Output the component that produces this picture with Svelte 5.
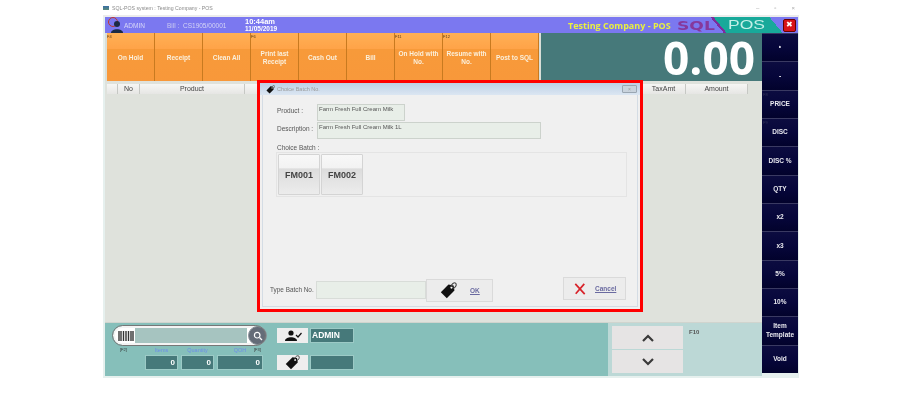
<script>
  const tools = [
    { key: 'F4', label: 'On Hold' },
    { key: '', label: 'Receipt' },
    { key: '', label: 'Clean All' },
    { key: 'F6', label: 'Print last Receipt' },
    { key: '', label: 'Cash Out' },
    { key: '', label: 'Bill' },
    { key: 'F11', label: 'On Hold with No.' },
    { key: 'F12', label: 'Resume with No.' },
    { key: '', label: 'Post to SQL' }
  ];
  const side = [
    { label: '•' },
    { label: '-' },
    { label: 'PRICE', key: 'F8' },
    { label: 'DISC', key: 'F9' },
    { label: 'DISC %' },
    { label: 'QTY' },
    { label: 'x2' },
    { label: 'x3' },
    { label: '5%' },
    { label: '10%' },
    { label: 'Item Template' },
    { label: 'Void' }
  ];
  const columns = [
    { label: '', w: 11 },
    { label: 'No', w: 22 },
    { label: 'Product', w: 105 },
    { label: '', w: 397 },
    { label: 'TaxAmt', w: 44 },
    { label: 'Amount', w: 62 }
  ];
  const totals = [
    { label: 'Items', w: 33 },
    { label: 'Quantity', w: 33 },
    { label: 'QOH', w: 46 }
  ];
</script>

{#snippet tag(size)}
  <svg width={size} height={size} viewBox="0 0 20 20" aria-hidden="true">
    <path d="M1 12 L10 3 L16 4 L17 10 L8 19 Z" fill="#111" />
    <circle cx="13.500" cy="6.500" r="1.300" fill="#fff" />
    <path d="M13 6 C13 2 17 0 18.500 1.500 C20 3.500 18 7 15.500 7.500" fill="none" stroke="#444" stroke-width="1.300" />
  </svg>
{/snippet}

<div class="window">
  <div class="os-title">
    <span class="os-icon"></span>
    <span class="os-text">SQL-POS system : Testing Company - POS</span>
    <span class="os-controls"><i>–</i><i>▫</i><i>×</i></span>
  </div>

  <header class="topbar">
    <svg class="user" width="16" height="16" viewBox="0 0 16 16" aria-hidden="true">
      <circle cx="5" cy="5" r="4.5" fill="none" stroke="#c0392b" />
      <circle cx="9" cy="7" r="3" fill="#1c2a44" />
      <path d="M3 16 C3 11 15 11 15 16 Z" fill="#1c2a44" />
    </svg>
    <span class="admin">ADMIN</span>
    <span class="bill">Bill :</span>
    <span class="billno">CS1905/00001</span>
    <div class="clock"><b>10:44am</b><b>11/05/2019</b></div>
    <span class="company">Testing Company - POS</span>
    <div class="logo">
      <span class="sql">SQL</span>
      <span class="pos">POS</span>
    </div>
    <button class="close">✖</button>
  </header>

  <div class="body">
    <div class="left">
      <div class="top-row">
        <div class="tools">
          {#each tools as t}
            <div class="tool">
              <small>{t.key}</small>
              <span>{t.label}</span>
            </div>
          {/each}
        </div>
        <div class="display">0.00</div>
      </div>

      <div class="main">
        <div class="thead">
          {#each columns as c}
            <div class="th" style="width:{c.w}px">{c.label}</div>
          {/each}
        </div>

        <div class="modal">
          <div class="modal-title">
            {@render tag(9)}
            <span>Choice Batch No.</span>
            <i class="modal-x">×</i>
          </div>
          <div class="modal-body">
            <div class="row">
              <label for="product">Product :</label>
              <div id="product" class="ro product">Farm Fresh Full Cream Milk</div>
            </div>
            <div class="row">
              <label for="desc">Description :</label>
              <div id="desc" class="ro desc">Farm Fresh Full Cream Milk 1L</div>
            </div>
            <div class="batch-label">Choice Batch :</div>
            <div class="batches">
              <button class="batch">FM001</button>
              <button class="batch">FM002</button>
            </div>
            <div class="foot">
              <span class="type-label">Type Batch No.</span>
              <input class="type-input" />
              <button class="ok">{@render tag(17)}<u>OK</u></button>
              <button class="cancel">
                <svg width="12" height="12" viewBox="0 0 14 14" aria-hidden="true">
                  <path d="M1.5 1 L12.5 13 M12 1 L2 12.5" stroke="#d8232a" stroke-width="2" fill="none" />
                </svg>
                <u>Cancel</u>
              </button>
            </div>
          </div>
        </div>
      </div>

      <div class="bottom">
        <div class="panel">
          <div class="scan">
            <div class="search">
              <svg class="barcode" width="16" height="12" viewBox="0 0 16 12" aria-hidden="true">
                <path d="M1 1v10M3 1v10M5.500 1v10M8 1v10M10.500 1v10M13 1v10M15 1v10" stroke="#333" stroke-width="1.4" />
              </svg>
              <div class="search-input"></div>
              <span class="lens">
                <svg width="10" height="10" viewBox="0 0 10 10" aria-hidden="true">
                  <circle cx="4.200" cy="4.200" r="2.800" fill="none" stroke="#fff" stroke-width="1.200" />
                  <path d="M6.500 6.500 L9 9" stroke="#fff" stroke-width="1.300" />
                </svg>
              </span>
            </div>
            <div class="totals">
              <small class="fkey">[F2]</small>
              {#each totals as t}
                <div class="total" style="width:{t.w}px">
                  <span>{t.label}</span>
                  <b>0</b>
                </div>
              {/each}
              <small class="fkey fkey-r">[F3]</small>
            </div>
          </div>
          <div class="info">
            <div class="info-row">
              <span class="info-btn">
                <svg width="18" height="11" viewBox="0 0 18 11" aria-hidden="true">
                  <circle cx="7" cy="3" r="2.600" fill="#111" />
                  <path d="M1 11 C1 6 13 6 13 11 Z" fill="#111" />
                  <path d="M12 5 L14 7 L17.500 3" fill="none" stroke="#111" stroke-width="1.200" />
                </svg>
              </span>
              <span class="info-val">ADMIN</span>
            </div>
            <div class="info-row">
              <span class="info-btn">{@render tag(15)}</span>
              <span class="info-val"></span>
            </div>
          </div>
        </div>
        <div class="pager">
          <div class="arrows">
            <button class="arrow" aria-label="up">
              <svg width="12" height="8" viewBox="0 0 12 8"><path d="M1 7 L6 2 L11 7" fill="none" stroke="#3a3a3a" stroke-width="2.200" /></svg>
            </button>
            <button class="arrow" aria-label="down">
              <svg width="12" height="8" viewBox="0 0 12 8"><path d="M1 1 L6 6 L11 1" fill="none" stroke="#3a3a3a" stroke-width="2.200" /></svg>
            </button>
          </div>
          <span class="f10">F10</span>
        </div>
      </div>
    </div>

    <aside class="side">
      {#each side as s}
        <button class="side-btn">
          {#if s.key}<small>{s.key}</small>{/if}
          {s.label}
        </button>
      {/each}
    </aside>
  </div>
</div>

<style>
  :global(body) {
    margin: 0;
    background: #fff;
    overflow: hidden;
  }

  .window {
    width: 696px;
    height: 378px;
    margin-left: 103px;
    background: #e6f0ee;
    font-family: "Liberation Sans", Arial, sans-serif;
    filter: blur(0.5px);
    display: flex;
    flex-direction: column;
  }

  .os-title {
    height: 15px;
    display: flex;
    align-items: center;
    gap: 3px;
    background: #fff;
    border-bottom: 2px solid #ececec;
  }

  .os-icon {
    width: 6px;
    height: 4px;
    background: linear-gradient(#3a6ea5, #5a8a7a);
  }

  .os-text {
    font-size: 5.2px;
    color: #8a8a8a;
  }

  .os-controls {
    margin-left: auto;
    display: flex;
    gap: 15px;
    padding-right: 4px;
    font-size: 6px;
    color: #aaa;
  }

  .os-controls i {
    font-style: normal;
  }

  .topbar {
    height: 16px;
    margin: 0 1px 0 2px;
    background: #7b78f0;
    display: flex;
    align-items: center;
    color: #d8d8f8;
    font-size: 6.5px;
    padding-left: 3px;
  }

  .admin {
    width: 43px;
  }

  .bill {
    width: 16px;
    color: #c8c8f0;
  }

  .billno {
    width: 62px;
    color: #d4d4f6;
  }

  .clock {
    display: flex;
    flex-direction: column;
    color: #fff;
    font-size: 6.5px;
    line-height: 7.5px;
    width: 323px;
  }

  .clock b:first-child {
    font-size: 7.5px;
  }

  .company {
    color: #e8f040;
    font: 700 9px "Open Sans", sans-serif;
    white-space: nowrap;
    width: 109px;
  }

  .logo {
    display: flex;
    align-items: center;
    height: 16px;
    width: 105px;
    background: linear-gradient(50deg, transparent 39.5%, #7d2c9c 39.5%, #7d2c9c 42%, #18a99a 42%, #18a99a 89.3%, transparent 89.3%);
  }

  .sql {
    color: #86389c;
    font: 700 13px/13px "DejaVu Sans", sans-serif;
    width: 51px;
    transform: scaleX(1.32);
    transform-origin: left;
  }

  .pos {
    color: #c4f0e8;
    font-size: 12.5px;
    line-height: 13px;
    transform: scaleX(1.4);
    transform-origin: left;
  }

  .close {
    width: 13px;
    height: 13px;
    margin-left: 1px;
    padding: 0;
    border: 1px solid #600;
    border-radius: 2px;
    background: #d8121a;
    color: #fff;
    font-size: 8px;
    line-height: 10px;
  }

  .body {
    flex: 1;
    display: flex;
    margin: 0 1px 0 2px;
    min-height: 0;
  }

  .left {
    width: 657px;
    display: flex;
    flex-direction: column;
  }

  .top-row {
    display: flex;
    height: 48px;
    padding-left: 2px;
    background: #d9ded8;
  }

  .tools {
    display: flex;
    width: 432px;
  }

  .tool {
    position: relative;
    width: 48px;
    box-sizing: border-box;
    border-right: 1px solid #c87a20;
    background: linear-gradient(#ffb055 0, #ffa348 33%, #f79a3a 34%, #f8983a 100%);
    display: flex;
    align-items: center;
    justify-content: center;
    text-align: center;
    color: #fbf0dc;
    font-size: 6.5px;
    font-weight: 700;
    line-height: 8.5px;
    padding: 2px 3px 0;
  }

  .tool small {
    position: absolute;
    left: 0;
    top: 1px;
    font-size: 4px;
    line-height: 5px;
    font-weight: 400;
    color: #5a3a10;
  }

  .display {
    flex: 1;
    margin-left: 2px;
    background: #46797a;
    color: #fff;
    font: 700 46px/48px "Open Sans", sans-serif;
    text-align: right;
    padding-right: 7px;
  }

  .main {
    position: relative;
    height: 242px;
    box-sizing: border-box;
    background: #dfe2dc;
    padding: 3px 0 0 2px;
    border-bottom: 1px solid #d0d4ce;
  }

  .thead {
    display: flex;
    height: 10px;
  }

  .th {
    box-sizing: border-box;
    background: linear-gradient(#f6f6f4, #e6e6e4);
    border-right: 1px solid #c6c8c4;
    font-size: 7px;
    line-height: 10px;
    text-align: center;
    color: #444;
  }

  .modal {
    position: absolute;
    left: 152px;
    top: -1px;
    width: 386px;
    height: 232px;
    box-sizing: border-box;
    border: 3px solid #f00;
    background: #f0f0f0;
    display: flex;
    flex-direction: column;
  }

  .modal-title {
    height: 12px;
    background: linear-gradient(#bdd0e6, #dbe6f2);
    display: flex;
    align-items: center;
    gap: 2px;
    padding: 0 3px 0 6px;
    font-size: 5.5px;
    color: #9a9a9a;
  }

  .modal-x {
    margin-left: auto;
    width: 13px;
    height: 6px;
    background: #c9d3dd;
    border: 1px solid #9aa6b2;
    border-radius: 1px;
    text-align: center;
    font-size: 5px;
    line-height: 6px;
    font-style: normal;
  }

  .modal-body {
    flex: 1;
    margin: 0 2px 2px;
    padding: 9px 0 0 14px;
    display: flex;
    flex-direction: column;
    border: 1px solid #d4dce4;
    border-top: 0;
    min-height: 0;
  }

  .row {
    display: flex;
    align-items: flex-start;
    height: 18px;
  }

  label {
    width: 40px;
    margin-top: 3px;
    font-size: 6.5px;
    line-height: 8px;
    color: #555;
  }

  .ro {
    box-sizing: border-box;
    height: 17px;
    padding: 1px;
    background: #e8eee8;
    border: 1px solid #ccd2cc;
    font-size: 6px;
    line-height: 7px;
    color: #555;
  }

  .product {
    width: 88px;
  }

  .desc {
    width: 224px;
  }

  .batch-label {
    margin-top: 4px;
    font-size: 6.5px;
    line-height: 8px;
    color: #555;
  }

  .batches {
    display: flex;
    align-items: flex-end;
    gap: 1px;
    width: 351px;
    height: 45px;
    margin: 0 0 0 -1px;
    box-sizing: border-box;
    padding: 1px;
    border: 1px solid #e4e4e4;
  }

  .batch {
    width: 42px;
    height: 41px;
    padding: 0;
    border: 1px solid #d4d4d4;
    border-radius: 1px;
    background: linear-gradient(#f8f8f8 0, #f2f2f2 34%, #dcdcdc 35%, #ececec 100%);
    font: 700 9px "Liberation Sans", sans-serif;
    color: #444;
  }

  .foot {
    display: flex;
    align-items: flex-start;
    margin: 82px 0 0 -7px;
  }

  .type-label {
    width: 46px;
    margin-top: 7px;
    font-size: 6.4px;
    color: #555;
    white-space: nowrap;
  }

  .type-input {
    width: 110px;
    height: 18px;
    margin-top: 2px;
    box-sizing: border-box;
    background: #e8eee8;
    border: 1px solid #d8dcd8;
    padding: 0;
  }

  .ok,
  .cancel {
    display: flex;
    align-items: center;
    box-sizing: border-box;
    padding: 0;
    border: 1px solid #dadada;
    background: #ececec;
    font: 700 6.5px "Liberation Sans", sans-serif;
    color: #6a6aa0;
  }

  .ok {
    width: 67px;
    height: 23px;
    padding-left: 13px;
    gap: 13px;
  }

  .cancel {
    width: 63px;
    height: 23px;
    margin: -2px 0 0 70px;
    padding-left: 10px;
    gap: 9px;
  }

  .bottom {
    height: 53px;
    display: flex;
  }

  .panel {
    width: 503px;
    background: #86bfba;
    display: flex;
    gap: 12px;
    padding: 3px 0 0 8px;
    box-sizing: border-box;
  }

  .scan {
    width: 152px;
  }

  .search {
    display: flex;
    align-items: center;
    height: 19px;
    box-sizing: border-box;
    border: 2px solid #f4f4f4;
    outline: 1px solid #777;
    border-radius: 10px;
    background: #fff;
    padding-left: 3px;
    gap: 1px;
  }

  .search-input {
    flex: 1;
    height: 15px;
    background: #a6c4c0;
  }

  .lens {
    width: 19px;
    height: 19px;
    margin-right: -4px;
    border-radius: 50%;
    background: #646c78;
    border: 1px solid #8a929a;
    box-sizing: border-box;
    display: flex;
    align-items: center;
    justify-content: center;
  }

  .totals {
    position: relative;
    display: flex;
    gap: 3px;
    margin-top: 10px;
    padding-left: 32px;
  }

  .fkey {
    position: absolute;
    left: 7px;
    top: -8px;
    font-size: 4px;
    color: #333;
  }

  .fkey-r {
    left: 141px;
  }

  .total {
    position: relative;
    height: 15px;
    box-sizing: border-box;
    background: #46797a;
    border: 1px solid #9ccac6;
    color: #fff;
    font-size: 8px;
    line-height: 13px;
    text-align: right;
    padding-right: 2px;
  }

  .total span {
    position: absolute;
    top: -10px;
    left: 0;
    right: 0;
    text-align: center;
    font-size: 5.5px;
    line-height: 8px;
    color: #6d8ce8;
  }

  .info {
    display: flex;
    flex-direction: column;
    gap: 12px;
    padding-top: 2px;
  }

  .info-row {
    display: flex;
    gap: 2px;
    height: 15px;
  }

  .info-btn {
    width: 31px;
    background: #eeeeee;
    display: flex;
    align-items: center;
    justify-content: center;
  }

  .info-val {
    width: 44px;
    box-sizing: border-box;
    background: #46797a;
    border: 1px solid #9ccac6;
    color: #fff;
    font-size: 8.5px;
    font-weight: 700;
    line-height: 13px;
    padding-left: 1px;
  }

  .pager {
    flex: 1;
    display: flex;
    background: #bcd8d6;
    padding: 3px 0 0 4px;
  }

  .arrows {
    width: 71px;
    display: flex;
    flex-direction: column;
    gap: 1px;
  }

  .arrow {
    height: 23px;
    padding: 0;
    border: 0;
    background: #e6e4e4;
  }

  .f10 {
    margin: 3px 0 0 6px;
    font-size: 6px;
    font-weight: 700;
    color: #555;
  }

  .side {
    width: 36px;
    height: 340px;
    display: flex;
    flex-direction: column;
  }

  .side-btn {
    position: relative;
    flex: 1;
    padding: 0;
    border: 0;
    border-top: 1px solid #3a3a62;
    background: linear-gradient(#0c0c40, #06063a 50%, #02022c);
    color: #e8e8ee;
    font: 700 6.5px/8.5px "Liberation Sans", sans-serif;
  }

  .side-btn small {
    position: absolute;
    left: 1px;
    top: 1px;
    font-size: 4px;
    line-height: 5px;
    font-weight: 400;
    color: #34345a;
  }
</style>
